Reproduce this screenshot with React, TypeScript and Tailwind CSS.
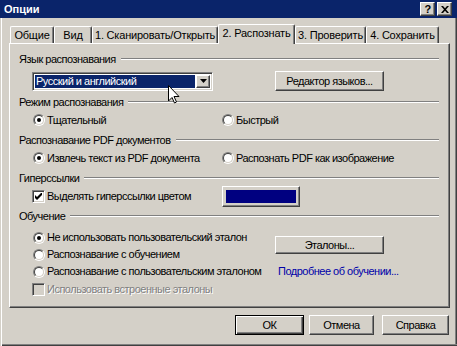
import React from "react";

const raised =
  "bg-[#d4d0c8] border border-t-white border-l-white border-r-[#404040] border-b-[#404040] shadow-[inset_-1px_-1px_0_#808080]";
const sunken =
  "border border-t-[#808080] border-l-[#808080] border-r-white border-b-white shadow-[inset_1px_1px_0_#404040,inset_-1px_-1px_0_#d4d0c8]";

function Radio({ checked }: { checked?: boolean }) {
  return (
    <span className="flex w-[12px] h-[12px] shrink-0 rounded-full border border-t-[#808080] border-l-[#808080] border-r-white border-b-white">
      <span className="flex flex-1 items-center justify-center rounded-full border border-t-[#404040] border-l-[#404040] border-r-[#d4d0c8] border-b-[#d4d0c8] bg-white">
        {checked && <span className="w-[4px] h-[4px] rounded-full bg-black" />}
      </span>
    </span>
  );
}

function Check({ checked, disabled }: { checked?: boolean; disabled?: boolean }) {
  return (
    <span
      className={`flex w-[13px] h-[13px] shrink-0 items-center justify-center ${sunken} ${
        disabled ? "bg-[#d4d0c8]" : "bg-white"
      }`}
    >
      {checked && (
        <svg width="7" height="7" viewBox="0 0 7 7">
          <path d="M0 2 L2 4 L7 -1 L7 2 L2 7 L0 5 Z" fill="black" />
        </svg>
      )}
    </span>
  );
}

function Header({ title }: { title: string }) {
  return (
    <div className="flex items-center h-[14px]">
      <span>{title}</span>
      <div className="ml-[5px] flex-1 h-[2px] border-t border-t-[#808080] border-b border-b-white" />
    </div>
  );
}

function Option({ label, checked }: { label: string; checked?: boolean }) {
  return (
    <div className="flex items-center gap-[2px]">
      <Radio checked={checked} />
      <span>{label}</span>
    </div>
  );
}

const tabsLeft: [string, string][] = [
  ["Общие", "w-[44px]"],
  ["Вид", "w-[38px]"],
  ["1. Сканировать/Открыть", "w-[126px]"],
];
const tabsRight: [string, string][] = [
  ["3. Проверить", "w-[71px]"],
  ["4. Сохранить", "w-[73px]"],
];

const tabBase =
  "flex items-center justify-center border-t border-l border-r border-t-white border-l-white border-r-[#404040] shadow-[inset_-1px_0_0_#808080] rounded-t-[2px] bg-[#d4d0c8] tracking-[-0.2px]";

export default function App() {
  return (
    <div className="relative w-[457px] h-[346px] bg-[#d4d0c8] flex flex-col text-[11px] leading-none tracking-[-0.5px] whitespace-nowrap text-black font-['Liberation_Sans',Arial,sans-serif] shadow-[inset_1px_0_0_#d4d0c8,inset_2px_0_0_white,inset_0_-1px_0_#404040,inset_0_-2px_0_#808080,inset_-1px_0_0_#404040,inset_-2px_0_0_#808080] overflow-hidden">
      {/* Title bar */}
      <div className="h-[18px] bg-[#0a246a] flex items-center pl-[4px] pr-[5px]">
        <span className="text-white font-bold text-[11px] tracking-normal">Опции</span>
        <div className="ml-auto flex gap-[2px]">
          <div className={`${raised} w-[15px] h-[14px] flex items-center justify-center font-bold text-[11px]`}>?</div>
          <div className={`${raised} w-[15px] h-[14px] flex items-center justify-center`}>
            <svg width="8" height="7" viewBox="0 0 8 7">
              <path d="M0 0 L2 0 L4 2.2 L6 0 L8 0 L5 3.5 L8 7 L6 7 L4 4.8 L2 7 L0 7 L3 3.5 Z" fill="black" />
            </svg>
          </div>
        </div>
      </div>

      {/* Tabs */}
      <div className="mt-[6px] h-[19px] pl-[10px] flex items-end">
        {tabsLeft.map(([t, w]) => (
          <div key={t} className={`${tabBase} ${w} h-[17px]`}>
            {t}
          </div>
        ))}
        <div className={`${tabBase} relative z-10 w-[77px] h-[20px] -mb-px pb-[3px]`}>2. Распознать</div>
        {tabsRight.map(([t, w]) => (
          <div key={t} className={`${tabBase} ${w} h-[17px]`}>
            {t}
          </div>
        ))}
      </div>

      {/* Panel */}
      <div className="ml-[9px] w-[441px] h-[265px] border border-t-white border-l-white border-r-[#404040] border-b-[#404040] shadow-[inset_-1px_-1px_0_#808080] pt-[8px] pl-[9px] pr-[10px] flex flex-col">
        <Header title="Язык распознавания" />
        <div className="mt-[4px] h-[22px] flex items-center">
          <div className={`ml-[13px] w-[181px] h-[19px] ${sunken} bg-white flex p-[2px] gap-[1px]`}>
            <div className="flex-1 bg-[#0a246a] text-white flex items-center pl-[1px]">Русский и английский</div>
            <div className={`${raised} w-[14px] flex items-center justify-center`}>
              <svg width="7" height="4" viewBox="0 0 7 4">
                <polygon points="0,0 7,0 3.5,4" fill="black" />
              </svg>
            </div>
          </div>
          <div className={`ml-[62px] w-[109px] h-[20px] ${raised} flex items-center justify-center`}>
            Редактор языков...
          </div>
        </div>

        <div className="mt-[3px]">
          <Header title="Режим распознавания" />
        </div>
        <div className="mt-[4px] h-[14px] flex items-center pl-[14px]">
          <div className="w-[189px]">
            <Option label="Тщательный" checked />
          </div>
          <Option label="Быстрый" />
        </div>

        <div className="mt-[6px]">
          <Header title="Распознавание PDF документов" />
        </div>
        <div className="mt-[4px] h-[14px] flex items-center pl-[14px]">
          <div className="w-[189px]">
            <Option label="Извлечь текст из PDF документа" checked />
          </div>
          <Option label="Распознать PDF как изображение" />
        </div>

        <div className="mt-[6px]">
          <Header title="Гиперссылки" />
        </div>
        <div className="mt-[1px] h-[21px] flex items-center pl-[13px]">
          <div className="w-[190px] flex items-center gap-[2px]">
            <Check checked />
            <span>Выделять гиперссылки цветом</span>
          </div>
          <div className={`w-[78px] h-[21px] ${raised} p-[3px] flex`}>
            <div className="flex-1 bg-[#000080]" />
          </div>
        </div>

        <div className="mt-[2px]">
          <Header title="Обучение" />
        </div>
        <div className="mt-[6px] flex">
          <div className="w-[256px] flex flex-col">
            <div className="h-[17px] flex items-center pl-[14px]">
              <Option label="Не использовать пользовательский эталон" checked />
            </div>
            <div className="h-[17px] flex items-center pl-[14px]">
              <Option label="Распознавание с обучением" />
            </div>
            <div className="h-[17px] flex items-center pl-[14px]">
              <Option label="Распознавание с пользовательским эталоном" />
            </div>
            <div className="mt-[1px] h-[17px] flex items-center pl-[13px] gap-[2px]">
              <Check disabled />
              <span className="text-[#808080] [text-shadow:1px_1px_0_#fff]">Использовать встроенные эталоны</span>
            </div>
          </div>
          <div className="flex flex-col">
            <div className={`mt-[7px] w-[109px] h-[18px] ${raised} flex items-center justify-center`}>Эталоны...</div>
            <div className="mt-[9px] h-[17px] flex items-center pl-[3px] text-[#0000a8]">Подробнее об обучении...</div>
          </div>
        </div>
      </div>

      {/* Buttons */}
      <div className="mt-[7px] flex justify-end pr-[8px]">
        <div className="w-[69px] h-[20px] border border-black bg-[#d4d0c8] shadow-[inset_1px_1px_0_white,inset_-1px_-1px_0_#404040,inset_-2px_-2px_0_#808080] flex items-center justify-center">
          ОК
        </div>
        <div className={`ml-[5px] w-[65px] h-[20px] ${raised} flex items-center justify-center`}>Отмена</div>
        <div className={`ml-[8px] w-[67px] h-[20px] ${raised} flex items-center justify-center`}>Справка</div>
      </div>

      {/* Mouse pointer */}
      <svg className="absolute left-[168px] top-[85px]" width="12" height="19" viewBox="0 0 12 19">
        <path d="M0.5 0.5 L0.5 16 L4 12.5 L6.5 18 L8.5 17 L6 11.5 L11 11.5 Z" fill="white" stroke="black" strokeWidth="1" />
      </svg>
    </div>
  );
}
